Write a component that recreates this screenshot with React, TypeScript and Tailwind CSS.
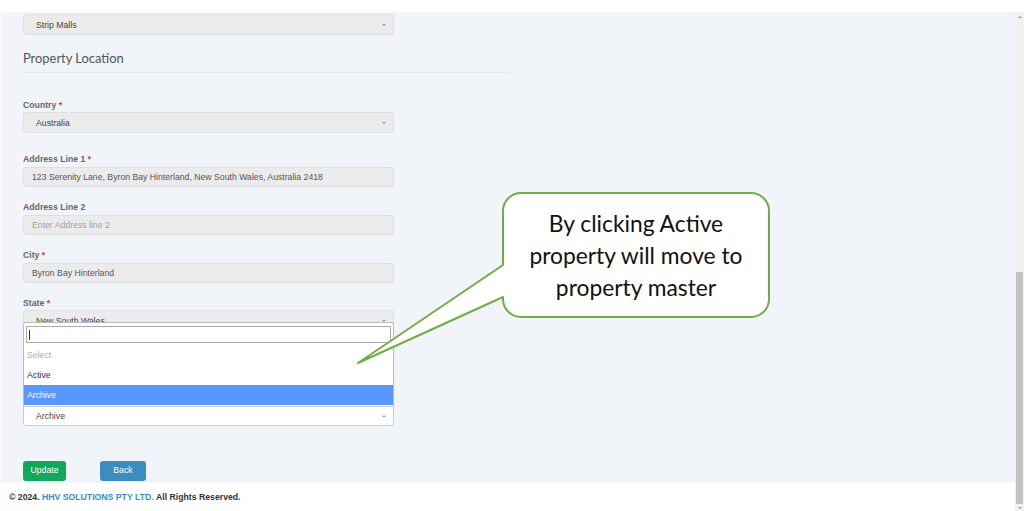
import { ReactNode } from "react";

function Caret({ up = false }: { up?: boolean }) {
  return (
    <span
      className={
        up
          ? "block w-0 h-0 border-l-[2px] border-r-[2px] border-b-[2px] border-l-transparent border-r-transparent border-b-[#999]"
          : "block w-0 h-0 border-l-[2px] border-r-[2px] border-t-[2px] border-l-transparent border-r-transparent border-t-[#999]"
      }
    />
  );
}

function Label({ children, req = false, className = "" }: { children: ReactNode; req?: boolean; className?: string }) {
  return (
    <div className={"h-[10px] leading-[10px] text-[8.7px] font-bold text-[#666] " + className}>
      {children}
      {req && <span className="text-[#e3342f]"> *</span>}
    </div>
  );
}

function Select({ value, className = "" }: { value: string; className?: string }) {
  return (
    <div
      className={
        "w-[371px] h-[21px] rounded-[3px] bg-[#ebebeb] border border-[#e0e0e0] flex items-center justify-between pl-[12px] pr-[7px] text-[8.7px] text-[#444] " +
        className
      }
    >
      <span className="pt-[2px]">{value}</span>
      <Caret />
    </div>
  );
}

function Input({ value, placeholder = false, className = "" }: { value: string; placeholder?: boolean; className?: string }) {
  return (
    <div
      className={
        "w-[371px] h-[20px] rounded-[3px] bg-[#ebebeb] border border-[#e0e0e0] flex items-center pl-[8px] pt-[1px] text-[8.7px] " +
        (placeholder ? "text-[#a0a0a0] " : "text-[#555] ") +
        className
      }
    >
      {value}
    </div>
  );
}

export default function App() {
  return (
    <div className="relative w-[1024px] h-[511px] overflow-hidden bg-white flex font-['Liberation_Sans',Arial,sans-serif]">
      {/* page */}
      <div className="flex-1 flex flex-col">
        <div className="h-[12px] bg-white" />
        <div className="flex-1 ml-[1px] bg-[#f1f4f9] pl-[22px] flex flex-col">
          <Select value="Strip Malls" className="mt-[2px]" />
          <h3 className="mt-[15px] h-[16px] leading-[16px] text-[12.9px] text-[#555] font-['Lato',sans-serif]">
            Property Location
          </h3>
          <div className="mt-[6px] h-px w-[487px] bg-[#e4e8ee]" />

          <Label req className="mt-[27px]">Country</Label>
          <Select value="Australia" className="mt-[2px]" />

          <Label req className="mt-[21px]">Address Line 1</Label>
          <Input
            className="mt-[3px]"
            value="123 Serenity Lane, Byron Bay Hinterland, New South Wales, Australia 2418"
          />

          <Label className="mt-[15px]">Address Line 2</Label>
          <Input className="mt-[3px]" value="Enter Address line 2" placeholder />

          <Label req className="mt-[15px]">City</Label>
          <Input className="mt-[3px]" value="Byron Bay Hinterland" />

          <Label req className="mt-[15px]">State</Label>
          <Select value="New South Wales" className="mt-[2px]" />

          {/* status select, opened upward */}
          <div className="relative mt-[75px] w-[371px]">
            <div className="absolute bottom-full left-0 w-[371px] h-[84px] bg-white border-t border-l border-r border-[#bbb] rounded-t-[3px] flex flex-col text-[8.7px]">
              <div className="mx-[2px] mt-[3px] h-[17px] border border-[#aaa] flex items-center pl-[2px]">
                <span className="w-px h-[10px] bg-[#333]" />
              </div>
              <div className="mt-[2px] h-[20px] leading-[21px] pl-[3px] text-[#aaa]">Select</div>
              <div className="h-[20px] leading-[21px] pl-[3px] text-[#333]">Active</div>
              <div className="h-[20px] leading-[21px] pl-[3px] text-white bg-[#5897fb]">Archive</div>
            </div>
            <div className="w-[371px] h-[20px] bg-white border border-[#ccc] rounded-b-[3px] flex items-center justify-between pl-[12px] pr-[7px] text-[8.7px] text-[#444]">
              <span className="pt-[2px]">Archive</span>
              <Caret up />
            </div>
          </div>

          <div className="mt-[35px] flex gap-[34px] text-[8.7px] text-white">
            <button className="w-[43px] h-[20px] rounded-[3px] bg-[#12a85a]">Update</button>
            <button className="w-[46px] h-[20px] rounded-[3px] bg-[#3c8dbc]">Back</button>
          </div>
        </div>
        <div className="h-[28px] bg-white flex items-center pt-[2px] pl-[9px] text-[8.7px] font-bold text-[#333]">
          © 2024.&nbsp;<span className="text-[#3c8dbc]">HHV SOLUTIONS PTY LTD.</span>&nbsp;All Rights Reserved.
        </div>
      </div>

      {/* scrollbar */}
      <div className="w-[9px] flex flex-col">
        <div className="h-[12px] bg-white" />
        <div className="flex-1 bg-[#f1f1f1] flex flex-col items-center">
          <div className="h-[10px] flex items-center">
            <Caret up />
          </div>
          <div className="h-[250px]" />
          <div className="w-[7px] h-[232px] bg-[#c1c1c1]" />
          <div className="flex-1 flex items-center">
            <Caret />
          </div>
        </div>
      </div>

      {/* callout annotation */}
      <svg className="absolute left-0 top-0 pointer-events-none" width="1024" height="511">
        <path
          d="M 521 193 H 751 A 18 18 0 0 1 769 211 V 299 A 18 18 0 0 1 751 317 H 521 A 18 18 0 0 1 503 299 V 297 L 358 363 L 503 265 V 211 A 18 18 0 0 1 521 193 Z"
          fill="white"
          stroke="#70ad47"
          strokeWidth="2"
          strokeLinejoin="round"
        />
      </svg>
      <div className="absolute left-[503px] top-[193px] w-[266px] h-[124px] flex items-center justify-center text-center text-[22.8px] leading-[32px] text-[#111] font-['Lato',sans-serif]">
        <div>
          By clicking Active
          <br />
          property will move to
          <br />
          property master
        </div>
      </div>
    </div>
  );
}
